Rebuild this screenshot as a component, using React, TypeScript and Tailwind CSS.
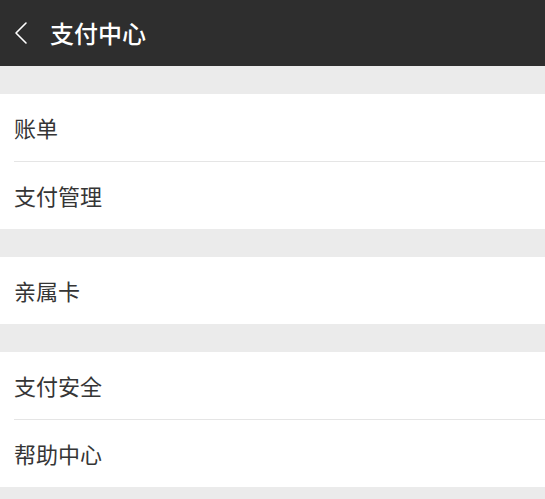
import React from 'react'

const font = { fontFamily: '"Noto Sans CJK SC", "Noto Sans", sans-serif' }

function Row({ label, divider }: { label: string; divider?: boolean }) {
  return (
    <div className="bg-white">
      {divider && <div className="ml-[14px] h-px bg-[#e5e5e5]" />}
      <div className="h-[67px] flex items-center pl-[14px] text-[22px] text-[#353535]">{label}</div>
    </div>
  )
}

export default function App() {
  return (
    <div className="w-[545px] h-[499px] bg-[#ebebeb] overflow-hidden" style={font}>
      <div className="h-[66px] bg-[#2e2e2e] flex items-center">
        <svg className="ml-[14px] w-[14px] h-[24px]" viewBox="0 0 14 24" fill="none">
          <path d="M12 2 L2 12 L12 22" stroke="#ffffff" strokeWidth="1.6" strokeLinecap="round" strokeLinejoin="round" />
        </svg>
        <span className="ml-[22px] text-[24px] font-medium text-white">支付中心</span>
      </div>

      <div className="h-[28px]" />
      <Row label="账单" />
      <Row label="支付管理" divider />

      <div className="h-[28px]" />
      <Row label="亲属卡" />

      <div className="h-[28px]" />
      <Row label="支付安全" />
      <Row label="帮助中心" divider />
    </div>
  )
}
